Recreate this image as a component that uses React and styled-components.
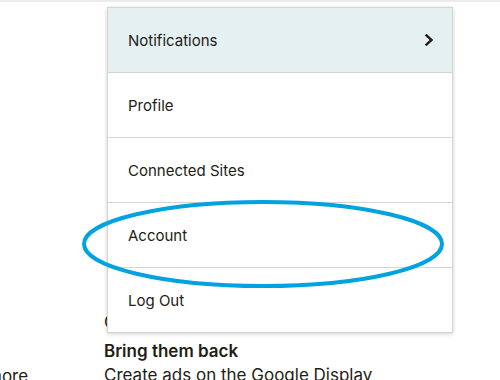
import React from "react";
import styled, { createGlobalStyle } from "styled-components";

const Global = createGlobalStyle`
  html, body { margin: 0; padding: 0; background: #fff; }
  body { width: 500px; height: 380px; overflow: hidden; font-family: "Inter", "Liberation Sans", sans-serif; color: #241c15; }
`;

const Page = styled.div`
  position: relative;
  width: 500px;
  height: 380px;
  overflow: hidden;
  border-top: 2px solid #ebebeb;
  box-sizing: border-box;
`;

const Content = styled.div`
  display: grid;
  grid-template-columns: 104px 1fr;
  padding-top: 308px;
`;

const LeftCol = styled.div`
  display: flex;
  flex-direction: column;
  padding-top: 54px;
  margin-left: -13px;
`;

const RightCol = styled.div`
  display: flex;
  flex-direction: column;
`;

const BodyText = styled.p`
  margin: 0;
  font-size: 17px;
  line-height: 24px;
  white-space: nowrap;
  font-weight: ${(p) => (p.$bold ? 600 : 400)};
  margin-top: ${(p) => p.$gap || 0}px;
`;

const Menu = styled.ul`
  position: absolute;
  left: 107px;
  top: 5px;
  width: 344px;
  margin: 0;
  padding: 0;
  list-style: none;
  background: #fff;
  border: 1px solid #d4d4d4;
  box-shadow: 0 1px 4px rgba(0, 0, 0, 0.18);
`;

const Item = styled.li`
  display: flex;
  align-items: center;
  justify-content: space-between;
  height: 65px;
  padding: 0 18px 0 20px;
  box-sizing: border-box;
  font-size: 15px;
  color: #241c15;
  background: ${(p) => (p.$active ? "#e4f0f2" : "#fff")};
  border-bottom: 1px solid #d4d4d4;
  &:last-child { border-bottom: none; height: 64px; }
`;

const Chevron = styled.svg`
  width: 10px;
  height: 12px;
`;

const Annotation = styled.svg`
  position: absolute;
  left: 80px;
  top: 194px;
  width: 366px;
  height: 96px;
  pointer-events: none;
`;

const items = ["Notifications", "Profile", "Connected Sites", "Account", "Log Out"];

export default function App() {
  return (
    <>
      <Global />
      <Page>
        <Content>
          <LeftCol>
            <BodyText>more</BodyText>
          </LeftCol>
          <RightCol>
            <BodyText>Create more ads</BodyText>
            <BodyText $bold $gap={5}>Bring them back</BodyText>
            <BodyText>Create ads on the Google Display</BodyText>
          </RightCol>
        </Content>
        <Menu>
          {items.map((label, i) => (
            <Item key={label} $active={i === 0}>
              {label}
              {i === 0 && (
                <Chevron viewBox="0 0 10 12">
                  <path d="M2.5 1.5 L7.5 6 L2.5 10.5" fill="none" stroke="#241c15" strokeWidth="2.4" strokeLinecap="square" />
                </Chevron>
              )}
            </Item>
          ))}
        </Menu>
        <Annotation viewBox="0 0 366 96">
          <ellipse cx="183" cy="48" rx="179" ry="42" fill="none" stroke="#00a3e0" strokeWidth="4" />
        </Annotation>
      </Page>
    </>
  );
}
